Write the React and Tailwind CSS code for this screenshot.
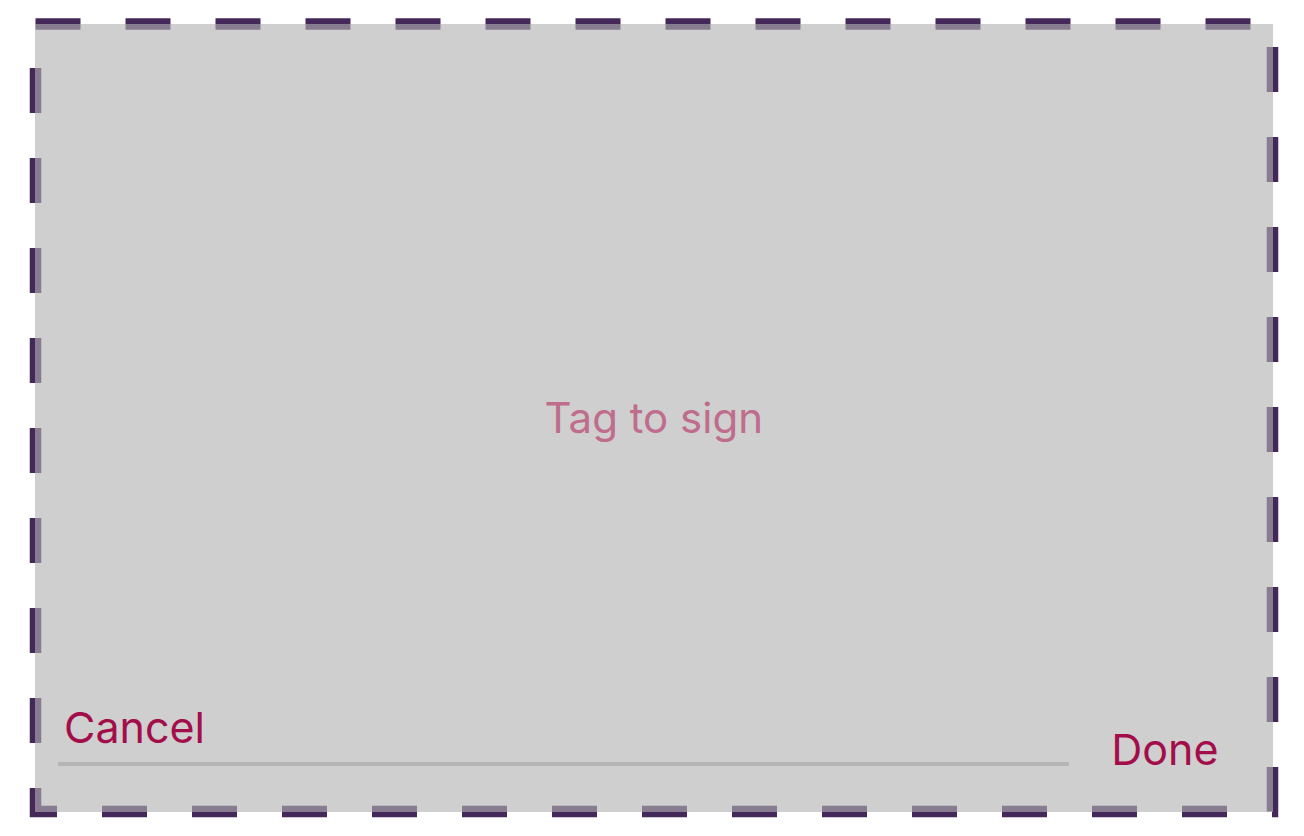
export default function App() {
  return (
    <div className="relative w-[1304px] h-[836px] bg-white pl-[35px] pt-[24px] font-['Inter','Liberation_Sans',sans-serif]">
      {/* dashed frame, sits under the translucent panel */}
      <svg className="absolute inset-0" width="1304" height="836">
        <rect
          x="35.5"
          y="24"
          width="1237"
          height="787.5"
          fill="none"
          stroke="#45285a"
          strokeWidth="11.5"
          strokeDasharray="45 45"
        />
      </svg>

      <div className="relative grid w-[1237.5px] h-[787.7px] bg-[rgba(178,178,178,0.62)]">
        <div className="col-start-1 row-start-1 self-center justify-self-center text-[42px] leading-none text-[#c06c8c]">
          Tag to sign
        </div>

        <div className="col-start-1 row-start-1 self-end flex items-end pl-[23px] pr-[54px] pb-[41px]">
          <div className="flex-1 flex flex-col mb-[5px]">
            <div className="pl-[6px] text-[43px] leading-none text-[#a30d4a]">Cancel</div>
            <div className="mt-[13px] h-[4px] bg-[#b5b5b5]" />
          </div>
          <button className="ml-[42px] text-[43px] leading-none text-[#a30d4a]">Done</button>
        </div>
      </div>
    </div>
  );
}
